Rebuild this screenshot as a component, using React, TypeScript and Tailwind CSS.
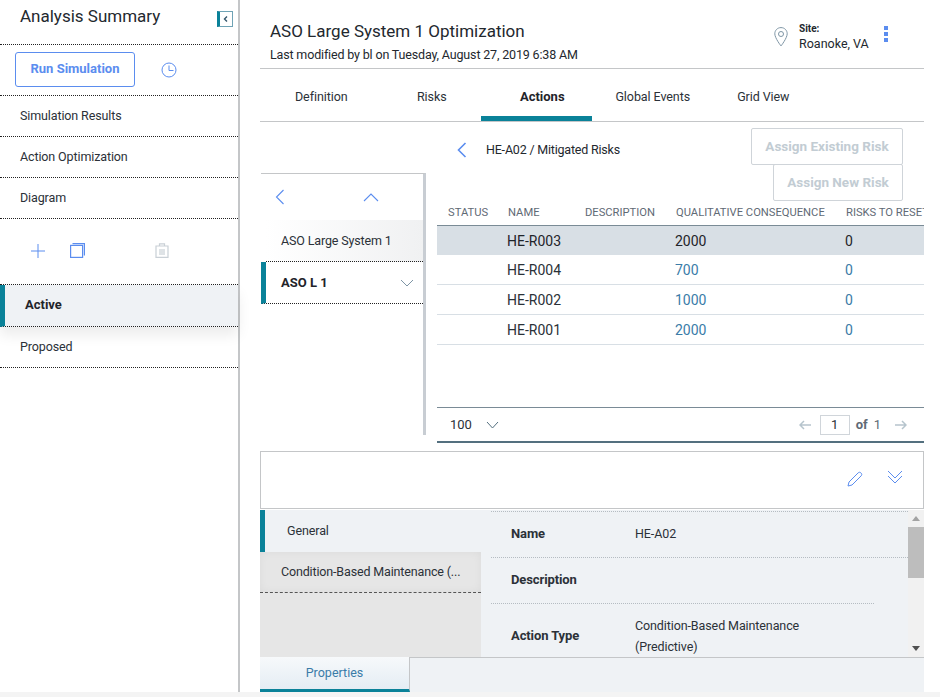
import React from "react";

const Blue = "#5b8def";

function Stroke({ w, h, children, color = Blue, sw = 1 }: { w: number; h: number; children: React.ReactNode; color?: string; sw?: number }) {
  return (
    <svg width={w} height={h} viewBox={`0 0 ${w} ${h}`} fill="none" stroke={color} strokeWidth={sw}>
      {children}
    </svg>
  );
}

function SideRow({ label }: { label: string }) {
  return (
    <div className="h-[41px] flex items-center pl-5 border-b border-dotted border-[#222] text-[12.5px] tracking-[-0.12px] text-[#2b3138]">
      {label}
    </div>
  );
}

function Sidebar() {
  return (
    <aside className="w-[240px] shrink-0 border-r-2 border-[#c4c6c8] flex flex-col">
      <div className="h-[45px] flex items-start justify-between pl-5 pr-1 border-b border-dotted border-[#222]">
        <span className="text-[17px] leading-[32px] text-[#23282e]">Analysis Summary</span>
        <div className="mt-[11px] mr-[1px] w-4 h-4 border border-[#6fa3b5] border-l-[3px] border-l-[#0a8299] flex items-center justify-center">
          <Stroke w={6} h={8} color="#33566b" sw={1.4}><path d="M4 1.5 1.5 4 4 6.5" /></Stroke>
        </div>
      </div>
      <div className="h-[51px] flex items-center pl-[15px] border-b border-dotted border-[#222]">
        <button className="-mt-[2px] w-[120px] h-[35px] rounded-[3px] border border-[#5b8def] text-[13px] font-bold text-[#5b8def] flex items-center justify-center">
          Run Simulation
        </button>
        <span className="ml-[26px] flex -mt-[1px]">
          <Stroke w={16} h={16}>
            <circle cx="8" cy="8" r="7" />
            <path d="M8 3.5V8.5H12.5" />
          </Stroke>
        </span>
      </div>
      <SideRow label="Simulation Results" />
      <SideRow label="Action Optimization" />
      <SideRow label="Diagram" />
      <div className="h-[66px] flex items-center pl-[31px] pb-[2px] border-b border-dotted border-[#222]">
        <Stroke w={14} h={14}><path d="M7 0V14M0 7H14" /></Stroke>
        <span className="ml-[25px] flex">
          <Stroke w={15} h={15} sw={1.2}>
            <rect x="0.6" y="2.4" width="12" height="12" />
            <path d="M2.5 .6H14.4V12.5" />
          </Stroke>
        </span>
        <span className="ml-[70px] flex">
          <Stroke w={14} h={15} color="#c9d0d6" sw={1.2}>
            <path d="M1 3H13V14.4H1ZM4.5 3V.8H9.5V3M5 6V12M7 6V12M9 6V12" />
          </Stroke>
        </span>
      </div>
      <div className="h-[42px] flex items-center pl-[20px] pb-[2px] bg-[#eff2f5] border-l-[5px] [border-left-style:solid] border-l-[#0a8299] border-b border-dotted border-b-[#222] shadow-[0_8px_14px_rgba(0,0,0,0.08)] text-[13px] font-bold text-[#1f242a]">
        Active
      </div>
      <SideRow label="Proposed" />
    </aside>
  );
}

function Header() {
  return (
    <div className="h-[69px] shrink-0 border-b border-[#c4c6c8] flex justify-between">
      <div className="pl-[10px] pt-[18px]">
        <div className="text-[17px] leading-[26px] text-[#23282e]">ASO Large System 1 Optimization</div>
        <div className="text-[12.5px] tracking-[-0.16px] leading-[22px] text-[#23282e]">Last modified by bl on Tuesday, August 27, 2019 6:38 AM</div>
      </div>
      <div className="flex items-start pt-[22px] pr-[36px]">
        <span className="mt-[5px] mr-[11px] flex">
          <Stroke w={14} h={20} color="#7e95a5">
            <path d="M7 .6C3.4.6.8 3.4.8 6.8.8 11 7 19 7 19s6.2-8 6.2-12.2C13.200 3.400 10.600.6 7 .6Z" />
            <circle cx="7" cy="7" r="2.500" />
          </Stroke>
        </span>
        <div className="w-[85px]">
          <div className="text-[10px] leading-[14px] font-bold text-[#23282e]">Site:</div>
          <div className="text-[12.5px] leading-[14px] mt-[1px] text-[#23282e]">Roanoke, VA</div>
        </div>
        <div className="mt-[4px] flex flex-col gap-[2px]">
          <i className="block w-[4px] h-[4px] bg-[#5b8def]" />
          <i className="block w-[4px] h-[4px] bg-[#5b8def]" />
          <i className="block w-[4px] h-[4px] bg-[#5b8def]" />
        </div>
      </div>
    </div>
  );
}

function Tabs() {
  const tabs = ["Definition", "Risks", "Actions", "Global Events", "Grid View"];
  return (
    <div className="h-[53px] shrink-0 flex border-b border-[#c4c6c8]">
      {tabs.map((t) => (
        <div
          key={t}
          className={
            t === "Actions"
              ? "w-[110.5px] flex items-center justify-center pl-[12px] pt-[8px] text-[13px] font-bold text-[#1f242a] border-b-[5px] border-[#0a8299]"
              : "w-[110.5px] flex items-center justify-center pl-[12px] pt-[5px] text-[12.5px] tracking-[-0.08px] text-[#2b3138]"
          }
        >
          {t}
        </div>
      ))}
    </div>
  );
}

function Tree() {
  return (
    <div className="w-[165px] ml-[1px] mt-[51px] h-[262px] shrink-0 border-t border-[#c4c6c8] border-r-[3px] border-r-[#c8cdd3] flex flex-col">
      <div className="h-[46px] flex items-center pl-[14px] shrink-0">
        <Stroke w={10} h={16} sw={1.1}><path d="M8.500 1 1.500 8l7 7" /></Stroke>
        <span className="ml-[78px] flex">
          <Stroke w={16} h={9} sw={1.1}><path d="M1 8 8 1l7 7" /></Stroke>
        </span>
      </div>
      <div className="h-[42px] shrink-0 ml-[5px] flex items-center pl-[15px] pt-[2px] text-[12.5px] tracking-[-0.15px] text-[#2b3138] border-b border-dotted border-[#222] bg-gradient-to-r from-white to-[#f0f1f2]">
        ASO Large System 1
      </div>
      <div className="h-[42px] shrink-0 flex items-center justify-between pl-[15px] pr-[9px] border-l-[5px] [border-left-style:solid] border-l-[#0a8299] border-b border-dotted border-b-[#222] text-[13px] font-bold text-[#1f242a]">
        ASO L 1
        <Stroke w={14} h={8} color="#7e95a5"><path d="M1 1 7 7l6-6" /></Stroke>
      </div>
    </div>
  );
}

const rows = [
  ["HE-R003", "2000", "0"],
  ["HE-R004", "700", "0"],
  ["HE-R002", "1000", "0"],
  ["HE-R001", "2000", "0"],
];

function Grid() {
  return (
    <div className="flex-1 min-w-0 ml-[11px] flex flex-col overflow-hidden">
      <div className="h-[79px] shrink-0 relative">
        <div className="flex items-center h-[55px] pl-[20px] text-[12.5px] tracking-[-0.2px] text-[#23282e]">
          <span className="mr-[19px] flex shrink-0"><Stroke w={10} h={16} sw={1.6}><path d="M8.500 1 1.500 8l7 7" /></Stroke></span>
          <span className="mt-[1px]">HE-A02 / Mitigated Risks</span>
        </div>
        <div className="absolute right-[21px] top-[6px] flex flex-col items-end">
          <div className="w-[152px] h-[37px] flex items-center justify-center rounded-[2px] border border-[#cfd4d9] text-[13.5px] font-bold text-[#c2ccd3]">Assign Existing Risk</div>
          <div className="w-[130px] h-[37px] -mt-[1px] flex items-center justify-center rounded-[2px] border border-[#cfd4d9] text-[13.5px] font-bold text-[#c2ccd3]">Assign New Risk</div>
        </div>
      </div>
      <div className="h-[24px] flex items-center shrink-0 whitespace-nowrap text-[11.2px] text-[#5f6a75]">
        <span className="w-[71px] pl-[11px] shrink-0">STATUS</span>
        <span className="w-[77px] shrink-0">NAME</span>
        <span className="w-[91px] shrink-0">DESCRIPTION</span>
        <span className="w-[170px] shrink-0">QUALITATIVE CONSEQUENCE</span>
        <span>RISKS TO RESET</span>
      </div>
      <div className="h-[183px] border-t border-[#7a8b96] border-b border-b-[#7a8b96] shrink-0">
        {rows.map((r, i) => (
          <div
            key={r[0]}
            className={
              i === 0
                ? "h-[29px] flex items-center pt-[1px] bg-[#d8dfe5] text-[14px] text-[#1f242a]"
                : "h-[30px] flex items-center pt-[2px] border-b border-[#d8dfe5] text-[14px] text-[#3a7ca8]"
            }
          >
            <span className={i === 0 ? "w-[70px] ml-[70px]" : "w-[70px] ml-[70px] text-[#2b3138]"}>{r[0]}</span>
            <span className="w-[170px] ml-[98px]">{r[1]}</span>
            <span>{r[2]}</span>
          </div>
        ))}
      </div>
      <div className="h-[35px] flex items-center border-b-2 border-[#54707f] text-[13px] text-[#2b3138] shrink-0">
        <span className="ml-[13px]">100</span>
        <span className="ml-[14px] flex"><Stroke w={13} h={8} color="#54707f"><path d="M1 1 6.500 7 12 1" /></Stroke></span>
        <span className="ml-auto flex"><Stroke w={13} h={10} color="#b6c4cd" sw={1.5}><path d="M12 5H1M5 1 1 5l4 4" /></Stroke></span>
        <span className="ml-[8px] w-[30px] h-[20px] border border-[#d0d5da] flex items-center justify-center">1</span>
        <span className="ml-[6px] font-bold text-[#5f6a75]">of</span>
        <span className="ml-[6px] text-[#5f6a75]">1</span>
        <span className="ml-[13px] mr-[17px] flex"><Stroke w={13} h={10} color="#b6c4cd" sw={1.5}><path d="M1 5H12M8 1l4 4-4 4" /></Stroke></span>
      </div>
    </div>
  );
}

function Detail() {
  return (
    <div className="h-[147px] flex shrink-0 mt-[1px] overflow-hidden">
      <div className="w-[221px] bg-[#e6e6e6] shrink-0">
        <div className="h-[42px] flex items-center pl-[22px] bg-[#eff2f5] border-l-[5px] border-[#0a8299] text-[12.5px] tracking-[-0.1px] text-[#2b3138]">General</div>
        <div className="h-[41px] flex items-center pl-[21px] border-b border-dashed border-[#555] shadow-[inset_0_0_8px_rgba(0,0,0,0.05)] text-[12.5px] tracking-[-0.15px] whitespace-nowrap text-[#2b3138]">Condition-Based Maintenance (...</div>
      </div>
      <div className="flex-1 bg-[#eff2f5] flex min-w-0">
        <div className="flex-1 pl-[10px] text-[12.5px] tracking-[-0.1px] text-[#2b3138]">
          <div className="h-[47px] mt-[1px] pb-[2px] flex items-center border-y border-dotted border-[#b5bcc2]">
            <span className="w-[144px] pl-[20px] text-[13px] font-bold">Name</span>
            <span className="mt-[1px]">HE-A02</span>
          </div>
          <div className="h-[46px] pb-[2px] flex items-center border-b border-dotted border-[#b5bcc2] w-[383px] pl-[20px] text-[13px] font-bold">Description</div>
          <div className="flex items-center h-[63px]">
            <span className="w-[144px] pl-[20px] text-[13px] font-bold shrink-0">Action Type</span>
            <span className="leading-[21px]">Condition-Based Maintenance<br />(Predictive)</span>
          </div>
        </div>
        <div className="w-[16px] bg-[#f1f1f1] flex flex-col items-center shrink-0">
          <span className="mt-[6px] w-0 h-0 border-x-[4px] border-x-transparent border-b-[5px] border-b-[#a3a3a3]" />
          <span className="mt-[6px] w-full h-[51px] bg-[#bdbdbd]" />
          <span className="mt-auto mb-[6px] w-0 h-0 border-x-[4px] border-x-transparent border-t-[5px] border-t-[#505050]" />
        </div>
      </div>
    </div>
  );
}

export default function App() {
  return (
    <div className="w-[940px] h-[697px] bg-white flex flex-col overflow-hidden font-['Roboto',sans-serif]">
      <div className="h-[692px] flex">
        <Sidebar />
        <main className="w-[664px] ml-[20px] flex flex-col shrink-0">
          <Header />
          <Tabs />
          <div className="h-[321px] flex shrink-0">
            <Tree />
            <Grid />
          </div>
          <div className="h-[58px] mt-[8px] shrink-0 border border-[#c4c6c8] flex items-center justify-end gap-[24px] pr-[20px]">
            <span className="flex -mt-[3px]">
              <Stroke w={16} h={16}><path d="M2 11 11 2c1-1 2-1 3 0s1 2 0 3L5 14l-4 1Z" /></Stroke>
            </span>
            <span className="flex -mt-[6px]">
              <Stroke w={16} h={14}><path d="M1 1 8 8l7-7M1 6l7 7 7-7" /></Stroke>
            </span>
          </div>
          <Detail />
          <div className="h-[35px] flex shrink-0">
            <div className="w-[150px] flex items-center justify-center text-[12.5px] text-[#3a7ca8] bg-gradient-to-b from-[#f7f9fb] to-[#e4edf4] border-b-[3px] border-[#0a8299] border-r border-r-[#c4c6c8]">Properties</div>
            <div className="flex-1 bg-[#eff2f5] border-t border-[#c4c6c8]" />
          </div>
        </main>
      </div>
      <div className="h-[5px] bg-[#f4f4f4]" />
    </div>
  );
}
